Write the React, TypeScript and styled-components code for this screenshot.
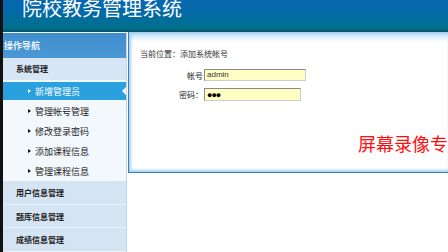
import React from "react";
import styled, { createGlobalStyle } from "styled-components";

const Global = createGlobalStyle`
  html, body { margin: 0; padding: 0; background: #fff; overflow: hidden; }
  body { font-family: "Noto Sans CJK SC", "Noto Sans", sans-serif; }
`;

const Page = styled.div`
  position: relative;
  width: 445px;
  height: 252px;
  border-left: 3px solid #111;
  display: flex;
  flex-direction: column;
  overflow: hidden;
  background: #fff;
`;

const Header = styled.div`
  height: 30px;
  border-bottom: 2px solid #05586e;
  background: linear-gradient(to bottom, #0767b0 0%, #036aa6 45%, #007090 85%, #006a82 100%);
  display: flex;
  align-items: flex-start;
  padding-left: 19px;
  box-sizing: content-box;
`;

const Title = styled.div`
  color: #fff;
  font-size: 20px;
  line-height: 16px;
  letter-spacing: 0px;
  font-family: "Noto Sans CJK SC", sans-serif;
`;

const Body = styled.div`
  flex: 1;
  display: flex;
  min-height: 0;
`;

const Sidebar = styled.div`
  width: 123px;
  border-right: 1px solid #b9d8ef;
  display: flex;
  flex-direction: column;
  background: #f3f8fd;
`;

const NavHeader = styled.div`
  margin-top: 1px;
  height: 25px;
  background: linear-gradient(to bottom, #3e8dcd, #4b98d5);
  color: #e8f3ff;
  font-size: 9px;
  font-weight: bold;
  display: flex;
  align-items: center;
  padding-left: 1px;
`;

const GroupTitle = styled.div`
  height: 23px;
  background: #d7e6f4;
  border-bottom: 1px solid #eef5fb;
  color: #222;
  font-size: 8px;
  font-weight: bold;
  display: flex;
  align-items: center;
  padding-left: 13px;
`;

const ItemList = styled.div`
  display: flex;
  flex-direction: column;
  background: #f3f8fd;
`;

const Item = styled.div<{ $active?: boolean }>`
  position: relative;
  height: 20px;
  display: flex;
  align-items: center;
  padding-left: 25px;
  gap: 4px;
  font-size: 9px;
  color: ${(p) => (p.$active ? "#fff" : "#222")};
  background: ${(p) => (p.$active ? "#2ba0df" : "transparent")};
  border-top: ${(p) => (p.$active ? "1px solid #f3f8fd" : "0")};
  border-bottom: ${(p) => (p.$active ? "1px solid #f3f8fd" : "0")};
  box-sizing: border-box;
`;

const Bullet = styled.span<{ $active?: boolean }>`
  width: 0;
  height: 0;
  border-top: 2.5px solid transparent;
  border-bottom: 2.5px solid transparent;
  border-left: 3.5px solid ${(p) => (p.$active ? "#fff" : "#111")};
`;

const Pointer = styled.span`
  position: absolute;
  right: 0;
  top: 5px;
  width: 0;
  height: 0;
  border-top: 4px solid transparent;
  border-bottom: 4px solid transparent;
  border-right: 4px solid #fff;
`;

const Marker = styled.span`
  position: absolute;
  left: -3px;
  top: 0;
  bottom: 0;
  width: 3px;
  background: #d21010;
`;

const Group = styled.div`
  height: 23px;
  background: #d4e4f3;
  border-bottom: 1px solid #e9f2fa;
  color: #222;
  font-size: 8px;
  font-weight: bold;
  display: flex;
  align-items: center;
  padding-left: 13px;
`;

const Main = styled.div`
  flex: 1;
  display: flex;
  flex-direction: column;
`;

const Panel = styled.div`
  height: 123px;
  border-left: 1px solid #3b80b8;
  border-bottom: 1px solid #3b80b8;
  margin-left: 1px;
  background: linear-gradient(to bottom, #9fcdee 0px, #d6ebf9 4px, #fff 10px);
  box-shadow: inset 3px 0 3px -1px #a9d1ef, inset 0 -3px 3px -1px #a9d1ef;
  padding: 17px 0 0 11px;
  display: flex;
  flex-direction: column;
  gap: 10px;
`;

const Crumb = styled.div`
  font-size: 8px;
  line-height: 10px;
  color: #333;
`;

const Form = styled.div`
  display: grid;
  grid-template-columns: 64px auto;
  row-gap: 7px;
  align-items: center;
  justify-items: start;
`;

const Label = styled.div`
  justify-self: end;
  font-size: 8px;
  color: #222;
  padding-right: 1px;
`;

const Field = styled.div<{ $w: number; $h: number }>`
  width: ${(p) => p.$w}px;
  height: ${(p) => p.$h}px;
  box-sizing: border-box;
  background: #ffffc4;
  border: 1px solid #8a8a8a;
  border-right-color: #ccc;
  border-bottom-color: #ccc;
  font-size: 8px;
  line-height: 10px;
  color: #333;
  padding-left: 2px;
  font-family: "Liberation Sans", sans-serif;
  display: flex;
  align-items: center;
`;

const Dots = styled.span`
  font-size: 9px;
  color: #000;
  letter-spacing: -1px;
`;

const Watermark = styled.div`
  position: absolute;
  left: 355px;
  top: 131px;
  color: #ff1010;
  font-size: 18px;
  line-height: 24px;
  white-space: nowrap;
  font-family: "Noto Sans CJK SC", serif;
`;

const items = ["新增管理员", "管理帐号管理", "修改登录密码", "添加课程信息", "管理课程信息"];

export default function App() {
  return (
    <>
      <Global />
      <Page>
        <Header>
          <Title>院校教务管理系统</Title>
        </Header>
        <Body>
          <Sidebar>
            <NavHeader>操作导航</NavHeader>
            <GroupTitle>系统管理</GroupTitle>
            <ItemList>
              {items.map((t, i) => (
                <Item key={t} $active={i === 0}>
                  {i === 0 && <Marker />}
                  <Bullet $active={i === 0} />
                  {t}
                  {i === 0 && <Pointer />}
                </Item>
              ))}
            </ItemList>
            <Group>用户信息管理</Group>
            <Group>题库信息管理</Group>
            <Group>成绩信息管理</Group>
          </Sidebar>
          <Main>
            <Panel>
              <Crumb>当前位置：添加系统帐号</Crumb>
              <Form>
                <Label>帐号</Label>
                <Field $w={102} $h={12}>admin</Field>
                <Label>密码：</Label>
                <Field $w={97} $h={13}>
                  <Dots>●●●</Dots>
                </Field>
              </Form>
            </Panel>
          </Main>
        </Body>
        <Watermark>屏幕录像专家</Watermark>
      </Page>
    </>
  );
}
